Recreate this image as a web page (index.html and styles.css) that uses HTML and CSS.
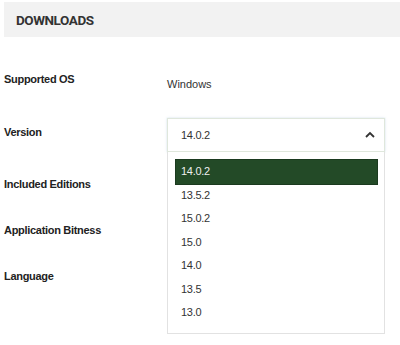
FILE: index.html
```html
<!DOCTYPE html>
<html>
<head>
<meta charset="utf-8">
<link rel="stylesheet" href="styles.css">
</head>
<body>
<div class="panel">
  <div class="header"><h2 class="title">DOWNLOADS</h2></div>
  <div class="rows">
    <div class="row row-first">
      <div class="label">Supported OS</div>
      <div class="value">Windows</div>
    </div>
    <div class="row row-select">
      <div class="label label-select">Version</div>
      <div class="select-wrap">
        <div class="select">
          <span class="select-text">14.0.2</span>
          <svg class="chevron" width="10" height="7" viewBox="0 0 10 7"><polyline points="1,6 5,2 9,6" fill="none" stroke="#333" stroke-width="1.8"/></svg>
        </div>
        <ul class="dropdown">
          <li class="option option-active">14.0.2</li>
          <li class="option">13.5.2</li>
          <li class="option">15.0.2</li>
          <li class="option">15.0</li>
          <li class="option">14.0</li>
          <li class="option">13.5</li>
          <li class="option">13.0</li>
        </ul>
      </div>
    </div>
    <div class="row">
      <div class="label">Included Editions</div>
    </div>
    <div class="row">
      <div class="label">Application Bitness</div>
    </div>
    <div class="row">
      <div class="label">Language</div>
    </div>
  </div>
</div>
</body>
</html>
```
FILE: styles.css
```css
* { box-sizing: border-box; }
html, body {
  min-height: 100%;
}
body {
  margin: 0;
  background: #fff;
  font-family: "Liberation Sans", Arial, sans-serif;
  color: #333;
}
.panel {
  padding: 2px 0 40px 4px;
  min-height: 345px;
}
.header {
  height: 35px;
  background: #f2f2f2;
  display: flex;
  align-items: center;
  padding: 1px 0 0 12px;
}
.title {
  margin: 0;
  font-family: Roboto, "Liberation Sans", sans-serif;
  font-weight: 700;
  font-size: 13.5px;
  letter-spacing: -0.45px;
  color: #333;
}
.rows {
  display: flex;
  flex-direction: column;
  padding-top: 34px;
}
.row {
  display: grid;
  grid-template-columns: 163px 218px;
  align-items: start;
  min-height: 46px;
}
.row-select {
  min-height: 59px;
}
.label {
  font-size: 11px;
  line-height: 16px;
  font-weight: 700;
  color: #222;
  letter-spacing: -0.3px;
}
.label-select {
  padding-top: 7px;
}
.value {
  font-size: 11px;
  line-height: 16px;
  padding-top: 5px;
  color: #333;
}
.select-wrap {
  position: relative;
  margin-top: 1px;
}
.select {
  height: 34px;
  border: 1px solid #dfe7dc;
  box-shadow: 0 0 2px rgba(170, 200, 220, 0.6);
  display: flex;
  align-items: center;
  justify-content: space-between;
  padding: 0 9px 1px 13px;
  background: #fff;
}
.select-text {
  font-size: 11px;
  letter-spacing: -0.3px;
  color: #333;
}
.chevron {
  display: block;
}
.dropdown {
  position: absolute;
  top: 34px;
  left: 0;
  width: 218px;
  margin: 0;
  padding: 8px 7px 8px 8px;
  list-style: none;
  background: #fff;
  border: 1px solid #e2e2e2;
  border-top: none;
  z-index: 2;
}
.option {
  height: 23.5px;
  line-height: 23.5px;
  padding-left: 5px;
  font-size: 11px;
  letter-spacing: -0.3px;
  color: #333;
}
.option-active {
  background: #234a27;
  color: #eee;
  outline: 1px solid #1b3a1f;
}
```
